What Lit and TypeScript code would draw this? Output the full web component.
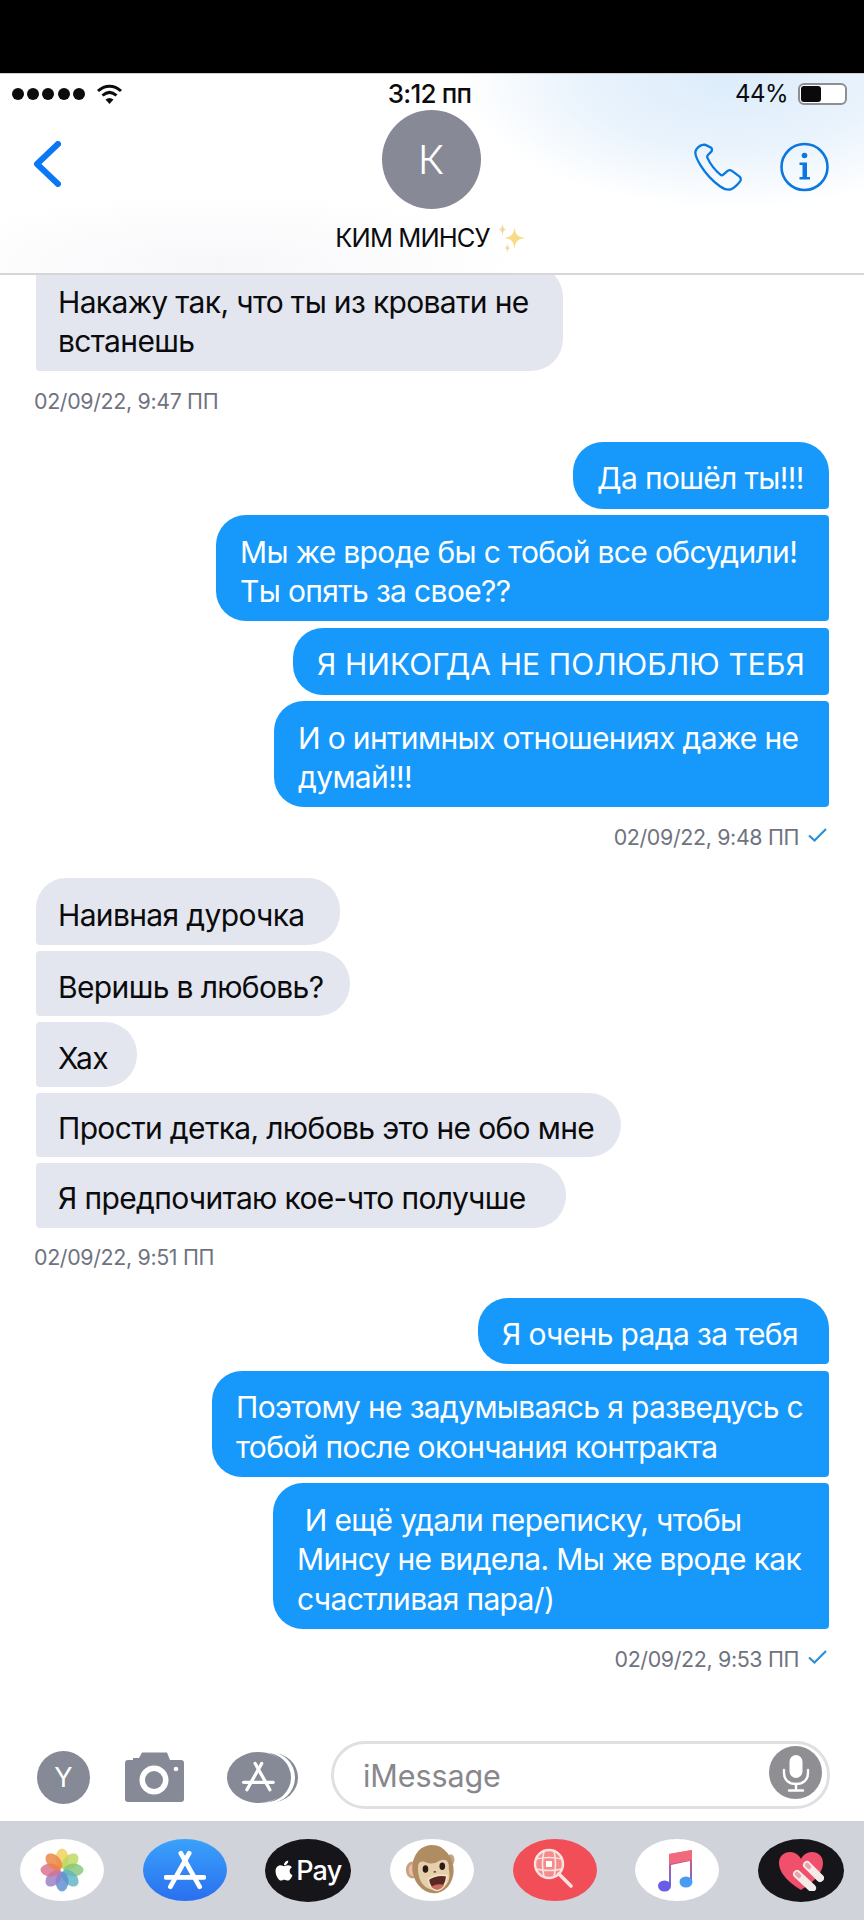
import { LitElement, html, css, svg } from "lit";
import { customElement } from "lit/decorators.js";
import { styleMap } from "lit/directives/style-map.js";

interface Msg { lines: string[]; w: number; h: number; first?: boolean; ls?: number }
interface Group { side: "in" | "out"; msgs: Msg[]; ts: string }

const groups: Group[] = [
  {
    side: "in",
    ts: "02/09/22, 9:47 ПП",
    msgs: [{ lines: ["Накажу так, что ты из кровати не", "встанешь"], w: 527, h: 106 }],
  },
  {
    side: "out",
    ts: "02/09/22, 9:48 ПП",
    msgs: [
      { lines: ["Да пошёл ты!!!"], w: 256, h: 67, first: true },
      { lines: ["Мы же вроде бы с тобой все обсудили!", "Ты опять за свое??"], w: 613, h: 106 },
      { lines: ["Я НИКОГДА НЕ ПОЛЮБЛЮ ТЕБЯ"], w: 536, h: 67, ls: 0.1 },
      { lines: ["И о интимных отношениях даже не", "думай!!!"], w: 555, h: 106 },
    ],
  },
  {
    side: "in",
    ts: "02/09/22, 9:51 ПП",
    msgs: [
      { lines: ["Наивная дурочка"], w: 304, h: 67, first: true },
      { lines: ["Веришь в любовь?"], w: 314, h: 65 },
      { lines: ["Хах"], w: 101, h: 64.5 },
      { lines: ["Прости детка, любовь это не обо мне"], w: 585, h: 64 },
      { lines: ["Я предпочитаю кое-что получше"], w: 530, h: 65 },
    ],
  },
  {
    side: "out",
    ts: "02/09/22, 9:53 ПП",
    msgs: [
      { lines: ["Я очень рада за тебя"], w: 351, h: 66, first: true },
      { lines: ["Поэтому не задумываясь я разведусь с", "тобой после окончания контракта"], w: 617, h: 106 },
      { lines: ["\u00a0И ещё удали переписку, чтобы", "Минсу не видела. Мы же вроде как", "счастливая пара/)"], w: 556, h: 145.5 },
    ],
  },
];

const appGlyph = (color: string, sw: number) => svg`
  <g stroke=${color} stroke-width=${sw} stroke-linecap="round" fill="none">
    <path d="M24 3 L6 35"/>
    <path d="M16 3 L34 35"/>
    <path d="M2 26 H38"/>
  </g>`;

const petals = ["#f0cf5a", "#bcd85e", "#84c67a", "#5fb3c4", "#5a8fd0", "#9a7cc4", "#d8708c", "#ec8240"];

@customElement("app-root")
export class AppRoot extends LitElement {
  static styles = css`
    :host {
      display: flex;
      flex-direction: column;
      width: 864px;
      height: 1920px;
      background: #fff;
      font-family: Inter, "Noto Sans", sans-serif;
      overflow: hidden;
    }
    .black { height: 74px; background: #000; border-bottom: 1px solid #cfcfd2; box-sizing: border-box; flex: none; }
    .head {
      flex: none;
      height: 201px;
      box-sizing: border-box;
      border-bottom: 2px solid #d6d6d9;
      background:
        radial-gradient(ellipse 270px 135px at 730px 0px, #dcecfb 0%, rgba(224,238,251,0.7) 55%, rgba(255,255,255,0) 100%),
        radial-gradient(ellipse 300px 70px at 220px 190px, #f7f7fa 0%, rgba(255,255,255,0) 100%),
        #fff;
      position: relative;
      z-index: 2;
    }
    .status {
      height: 36px;
      display: grid;
      grid-template-columns: 1fr auto 1fr;
      align-items: center;
      padding: 3px 17px 0 12px;
      box-sizing: border-box;
      color: #0c0c0e;
      font-size: 24px;
      letter-spacing: -0.5px;
    }
    .status-l { display: flex; align-items: center; gap: 11px; }
    .dots { display: flex; gap: 3.2px; }
    .dots i { width: 12px; height: 12px; border-radius: 50%; background: #0c0c0e; display: block; }
    .time { font-weight: 500; font-size: 26px; letter-spacing: -0.8px; }
    .status-r { display: flex; align-items: center; justify-content: flex-end; gap: 10px; }
    .batt {
      width: 49px; height: 22px; box-sizing: border-box;
      border: 2px solid #8f8f93; border-radius: 6px; background: #fff; padding: 1px;
    }
    .batt i { display: block; height: 100%; width: 20px; background: #0a0a0a; border-radius: 3px; }
    .nav {
      display: grid;
      grid-template-columns: 1fr auto 1fr;
      align-items: start;
      padding: 0 35px 0 33px;
    }
    .back { display: block; margin-top: 31px; }
    .mid { display: flex; flex-direction: column; align-items: center; }
    .avatar {
      width: 99px; height: 99px; border-radius: 50%;
      background: #878a96; color: #fff;
      display: flex; align-items: center; justify-content: center;
      font-size: 40px; font-weight: 300;
    }
    .name {
      margin-top: 14px;
      display: flex; align-items: center; gap: 6px;
      font-size: 25.5px; letter-spacing: -0.9px; color: #0c0c0e; line-height: 30px;
    }
    .actions { display: flex; justify-content: flex-end; gap: 38px; margin-top: 32px; }
    .msgs { flex: 1; min-height: 0; overflow: hidden; }
    .msgs .group:first-child { margin-top: -10px; padding-top: 0; }
    .group { display: flex; flex-direction: column; gap: 6.5px; padding-top: 26px; }
    .b {
      box-sizing: border-box;
      display: flex;
      flex-direction: column;
      justify-content: center;
      padding: 8px 0 0 24px;
      font-size: 30px;
      line-height: 39.5px;
      letter-spacing: -0.65px;
      white-space: nowrap;
    }
    .in { align-items: flex-start; padding-left: 36px; gap: 6px; }
    .out { align-items: flex-end; padding-right: 35px; }
    .in .b { background: #e3e6ee; color: #0b0b0d; border-radius: 4px 32px 32px 4px; padding-left: 22px; }
    .in .b.first { border-top-left-radius: 30px; }
    .out .b { background: #1799fb; color: #fff; border-radius: 30px 4px 4px 30px; }
    .out .b.first { border-top-right-radius: 30px; }
    .ts {
      height: 30px; margin-top: 8.5px;
      display: flex; align-items: center; gap: 9px;
      font-size: 21.4px; color: #6f7380; letter-spacing: -0.35px;
      white-space: nowrap;
    }
    .in .ts { margin-left: -2px; }
    .out .ts { margin-right: 2px; }
    .check { margin-top: -4px; display: block; }
    .composer {
      flex: none; height: 93px; box-sizing: border-box;
      display: flex; align-items: center;
      padding: 0 34px 0 37px;
    }
    .y {
      width: 53px; height: 53px; border-radius: 50%; background: #868a96; color: #fff;
      display: flex; align-items: center; justify-content: center; font-size: 27px;
      margin: 5px 0 0;
    }
    .cam { margin: 5px 0 0 35px; display: block; }
    .apps { margin: 5px 0 0 43px; display: block; }
    .input {
      flex: 1; height: 68px; box-sizing: border-box; margin-left: 33px;
      border: 3px solid #e0e0e3; border-radius: 34px;
      display: flex; align-items: center; justify-content: space-between;
      padding: 0 5px 0 29px;
      color: #87878c; font-size: 30.5px; letter-spacing: -0.1px;
    }
    .input span { margin-top: 2px; }
    .mic {
      width: 53px; height: 53px; border-radius: 50%; background: #8e8e93;
      display: flex; align-items: center; justify-content: center; margin-top: -4px;
    }
    .dock {
      flex: none; height: 99px; background: #d1d3db;
      display: flex; align-items: flex-start; justify-content: space-between;
      padding: 18px 20px 0;
      box-sizing: border-box;
    }
    .pill {
      width: 84px; height: 62px; border-radius: 50%;
      display: flex; align-items: center; justify-content: center;
      flex: none;
    }
    .white { background: #fff; }
    .blue { background: linear-gradient(#3aa2fb, #2a6ff0); }
    .dark { background: #15151a; width: 86px; height: 63px; }
    .red { background: #f24e58; }
    .pay { color: #fff; font-size: 27px; font-weight: 500; letter-spacing: -0.8px; display: flex; align-items: center; gap: 3px; }
  `;

  private bubble(m: Msg) {
    const st: Record<string, string> = { width: m.w + "px", height: m.h + "px" };
    if (m.ls !== undefined) st["letter-spacing"] = m.ls + "px";
    return html`<div class="b ${m.first ? "first" : ""}" style=${styleMap(st)}>
      ${m.lines.map((l) => html`<span>${l}</span>`)}
    </div>`;
  }

  private flower() {
    return svg`<svg width="46" height="46" viewBox="-23 -23 46 46">
      ${petals.map((c, i) => svg`<ellipse cx="0" cy="-11.500" rx="6.500" ry="10" fill=${c} fill-opacity="0.82" transform="rotate(${i * 45})"/>`)}
    </svg>`;
  }

  render() {
    return html`
      <div class="black"></div>
      <header class="head">
        <div class="status">
          <div class="status-l">
            <div class="dots"><i></i><i></i><i></i><i></i><i></i></div>
            <svg width="27" height="22" viewBox="0 0 27 22" fill="none" stroke="#0c0c0e" stroke-width="3">
              <path d="M2 8 C9 1.500 18 1.500 25 8"/>
              <path d="M6.500 12.500 C11 8.500 16 8.500 20.500 12.500"/>
              <path d="M13.500 21 L9.500 16.500 C12 14.500 15 14.500 17.500 16.500 Z" fill="#0c0c0e" stroke="none"/>
            </svg>
          </div>
          <div class="time">3:12 пп</div>
          <div class="status-r"><span>44%</span><div class="batt"><i></i></div></div>
        </div>
        <div class="nav">
          <div>
            <svg class="back" width="28" height="46" viewBox="0 0 28 46" fill="none" stroke="#0a78f5" stroke-width="6" stroke-linecap="round" stroke-linejoin="round">
              <path d="M25 3 L4 23 L25 43"/>
            </svg>
          </div>
          <div class="mid">
            <div class="avatar">К</div>
            <div class="name">КИМ МИНСУ
              <svg width="31" height="30" viewBox="0 0 30 30">
                <path d="M18 4 C19 12 21 14 29 15 C21 16 19 18 18 26 C17 18 15 16 7 15 C15 14 17 12 18 4Z" fill="#f7dc85"/>
                <path d="M6 0 C6.500 5 7.500 6 10 6.500 C7.500 7 6.500 8 6 13 C5.500 8 4.500 7 2 6.500 C4.500 6 5.500 5 6 0Z" fill="#eed9a0"/>
                <path d="M11 20 C11.400 24 12 24.500 14 25 C12 25.500 11.400 26 11 30 C10.600 26 10 25.500 8 25 C10 24.500 10.600 24 11 20Z" fill="#eed9a0"/>
              </svg>
            </div>
          </div>
          <div class="actions">
            <svg width="48" height="50" viewBox="0 0 50 50" fill="none" stroke="#0a78e0" stroke-width="2.400" stroke-linejoin="round">
              <path d="M9 2 C6 2.500 2.500 5.500 1.500 9 C1 12 3 17 7 23.500 C12 31.500 18 38.500 27 45 C31 48 36 49 39 48 C42 46.500 47 42 48.500 39 C49 37.500 48.500 36 47.500 35 L39.500 29 C38 28 36.500 28 35 29 L30.500 33 C29.500 33.800 28.500 33.800 27.500 33 C21.500 28 17 22 14 15.500 C13.500 14.500 13.700 13.500 14.500 12.500 L18 9 C19 7.800 19 6.500 18 5 L13 2.500 C12 1.800 10.500 1.700 9 2 Z"/>
            </svg>
            <svg width="49" height="50" viewBox="0 0 49 50" fill="none">
              <circle cx="24.500" cy="25" r="23" stroke="#0a78e0" stroke-width="2.600"/>
              <circle cx="24.500" cy="13.500" r="2.800" fill="#0a78e0"/>
              <path d="M19.500 20.500 H27 V35 H30 V37.500 H19.500 V35 H22.500 V23 H19.500Z" fill="#0a78e0"/>
            </svg>
          </div>
        </div>
      </header>
      <main class="msgs">
        ${groups.map(
          (g) => html`<section class="group ${g.side}">
            ${g.msgs.map((m) => this.bubble(m))}
            <div class="ts">
              <span>${g.ts}</span>
              ${g.side === "out"
                ? html`<svg class="check" width="19" height="14" viewBox="0 0 19 14" fill="none" stroke="#2e8fd6" stroke-width="2.200"><path d="M1 7.500 L6.500 12.500 L18 1"/></svg>`
                : ""}
            </div>
          </section>`
        )}
      </main>
      <div class="composer">
        <div class="y">Y</div>
        <svg class="cam" width="59" height="50" viewBox="0 0 59 50">
          <path d="M5 8 H8 V6 H14 L17 0.500 H42 L45 8 H56 Q59 8 59 11 V47 Q59 50 56 50 H3 Q0 50 0 47 V11 Q0 8 3 8Z" fill="#868a96"/>
          <circle cx="29" cy="28" r="14.500" fill="#fff"/>
          <circle cx="29" cy="28" r="9" fill="#868a96"/>
          <circle cx="51" cy="17" r="2.300" fill="#fff"/>
        </svg>
        <svg class="apps" width="71" height="51" viewBox="0 0 71 51">
          <ellipse cx="44" cy="25.500" rx="27" ry="25" fill="#868a96"/>
          <ellipse cx="41" cy="25.500" rx="27" ry="26" fill="#fff"/>
          <ellipse cx="38" cy="25.500" rx="26" ry="25" fill="#868a96"/>
          <ellipse cx="33" cy="25.500" rx="27" ry="26" fill="#fff"/>
          <ellipse cx="31.500" cy="25.500" rx="31.500" ry="25.500" fill="#868a96"/>
          <g transform="translate(15 9) scale(0.82)">${appGlyph("#fff", 4)}</g>
        </svg>
        <div class="input">
          <span>iMessage</span>
          <div class="mic">
            <svg width="30" height="38" viewBox="0 0 30 38" fill="none" stroke="#fff" stroke-width="2.400" stroke-linecap="round">
              <rect x="8.500" y="1" width="13" height="23" rx="6.500" fill="#fff" stroke="none"/>
              <path d="M3 16 V19 C3 26 8 30 15 30 C22 30 27 26 27 19 V16"/>
              <path d="M15 30 V36 M8 36.500 H22"/>
            </svg>
          </div>
        </div>
      </div>
      <div class="dock">
        <div class="pill white">${this.flower()}</div>
        <div class="pill blue">
          <svg width="42" height="40" viewBox="0 0 40 38">${appGlyph("#fff", 4.500)}</svg>
        </div>
        <div class="pill dark pay">
          <svg width="18" height="23" viewBox="0 0 384 512" fill="#fff"><path d="M318.700 268.700c-.2-36.700 16.400-64.400 50-84.800-18.800-26.900-47.200-41.700-84.700-44.600-35.500-2.800-74.300 20.700-88.500 20.700-15 0-49.400-19.700-76.400-19.700C63.300 141.200 4 184.800 4 273.500q0 39.300 14.400 81.200c12.800 36.700 59 126.700 107.200 125.200 25.200-.6 43-17.900 75.800-17.900 31.800 0 48.300 17.900 76.400 17.900 48.600-.7 90.400-82.500 102.600-119.300-65.200-30.700-61.700-90-61.700-91.900zm-56.600-164.200c27.300-32.400 24.800-61.900 24-72.500-24.100 1.400-52 16.400-67.900 34.900-17.500 19.800-27.800 44.300-25.600 71.900 26.100 2 49.900-11.400 69.500-34.300z"/></svg>
          <span>Pay</span>
        </div>
        <div class="pill white">
          <svg width="56" height="56" viewBox="0 0 60 56">
            <ellipse cx="9" cy="28" rx="7" ry="9" fill="#c9a27a"/>
            <ellipse cx="9.500" cy="28" rx="4.500" ry="6.500" fill="#eebcae"/>
            <ellipse cx="50" cy="17" rx="4" ry="6" fill="#c4a47e"/>
            <ellipse cx="31" cy="27" rx="22" ry="26" fill="#b08c62" transform="rotate(-10 31 27)"/>
            <path d="M15 28 Q14 16 24 20 Q31 23 38 18 Q49 14 48 27 Q52 46 34 50 Q16 48 15 28Z" fill="#e6d0ac"/>
            <ellipse cx="23" cy="27" rx="3" ry="4" fill="#2a1c14"/>
            <ellipse cx="41" cy="24" rx="3" ry="4" fill="#2a1c14"/>
            <ellipse cx="33" cy="30" rx="1.500" ry="1" fill="#6a4c34"/>
            <path d="M26 38 Q35 32 46 34 Q45 48 35 50 Q27 48 26 38Z" fill="#5a2a22" stroke="#f3e3c8" stroke-width="1.800"/>
            <path d="M29 46 Q36 42 43 44 Q40 49 35 49 Q31 48 29 46Z" fill="#c96a5c"/>
          </svg>
        </div>
        <div class="pill red">
          <svg width="46" height="46" viewBox="0 0 46 46" fill="none">
            <circle cx="17" cy="17" r="14" fill="#f58a8c" stroke="#fbe3df" stroke-width="2.400"/>
            <g stroke="#fbe3df" stroke-width="1.600">
              <path d="M4 12 Q17 9 30 12 M4 22 Q17 25 30 22 M12 4 Q9 17 12 30 M22 4 Q25 17 22 30"/>
            </g>
            <rect x="14" y="14" width="6" height="6" fill="#fff"/>
            <path d="M27 27 L39 39" stroke="#fbe3df" stroke-width="3.600" stroke-linecap="round"/>
          </svg>
        </div>
        <div class="pill white">
          <svg width="40" height="46" viewBox="0 0 40 46">
            <defs>
              <linearGradient id="mg" x1="0" y1="0" x2="0" y2="1"><stop offset="0" stop-color="#ef5c74"/><stop offset="0.35" stop-color="#c45a9a"/><stop offset="1" stop-color="#5a70e0"/></linearGradient>
            </defs>
            <path d="M12 7 L35 3 V34 H33 V14 L14 18 V38 H12Z" fill="url(#mg)"/>
            <path d="M12 7 L35 3 V13 L12 17Z" fill="#ef6b7c"/>
            <ellipse cx="7.500" cy="39" rx="6.500" ry="5.500" fill="#6a5ce6"/>
            <ellipse cx="29" cy="35" rx="6.500" ry="5.500" fill="#4a9cf2"/>
          </svg>
        </div>
        <div class="pill dark">
          <svg width="46" height="40" viewBox="0 0 46 40" fill="none" stroke-linecap="round">
            <path d="M23 39 C13 33 1 23 1 12 C1 5 6 1 12 1 C17 1 21 4 23 8 C25 4 29 1 34 1 C40 1 45 5 45 12 C45 23 33 33 23 39Z" fill="#f0506c"/>
            <path d="M29 14 L42 27" stroke="#f3ece8" stroke-width="8"/>
            <path d="M19 23 L34 37" stroke="#f3ece8" stroke-width="8"/>
            <path d="M29 14 L31 16" stroke="#eaa4ac" stroke-width="4.500"/>
            <path d="M19 23 L21 25" stroke="#eaa4ac" stroke-width="4.500"/>
          </svg>
        </div>
      </div>
    `;
  }
}
